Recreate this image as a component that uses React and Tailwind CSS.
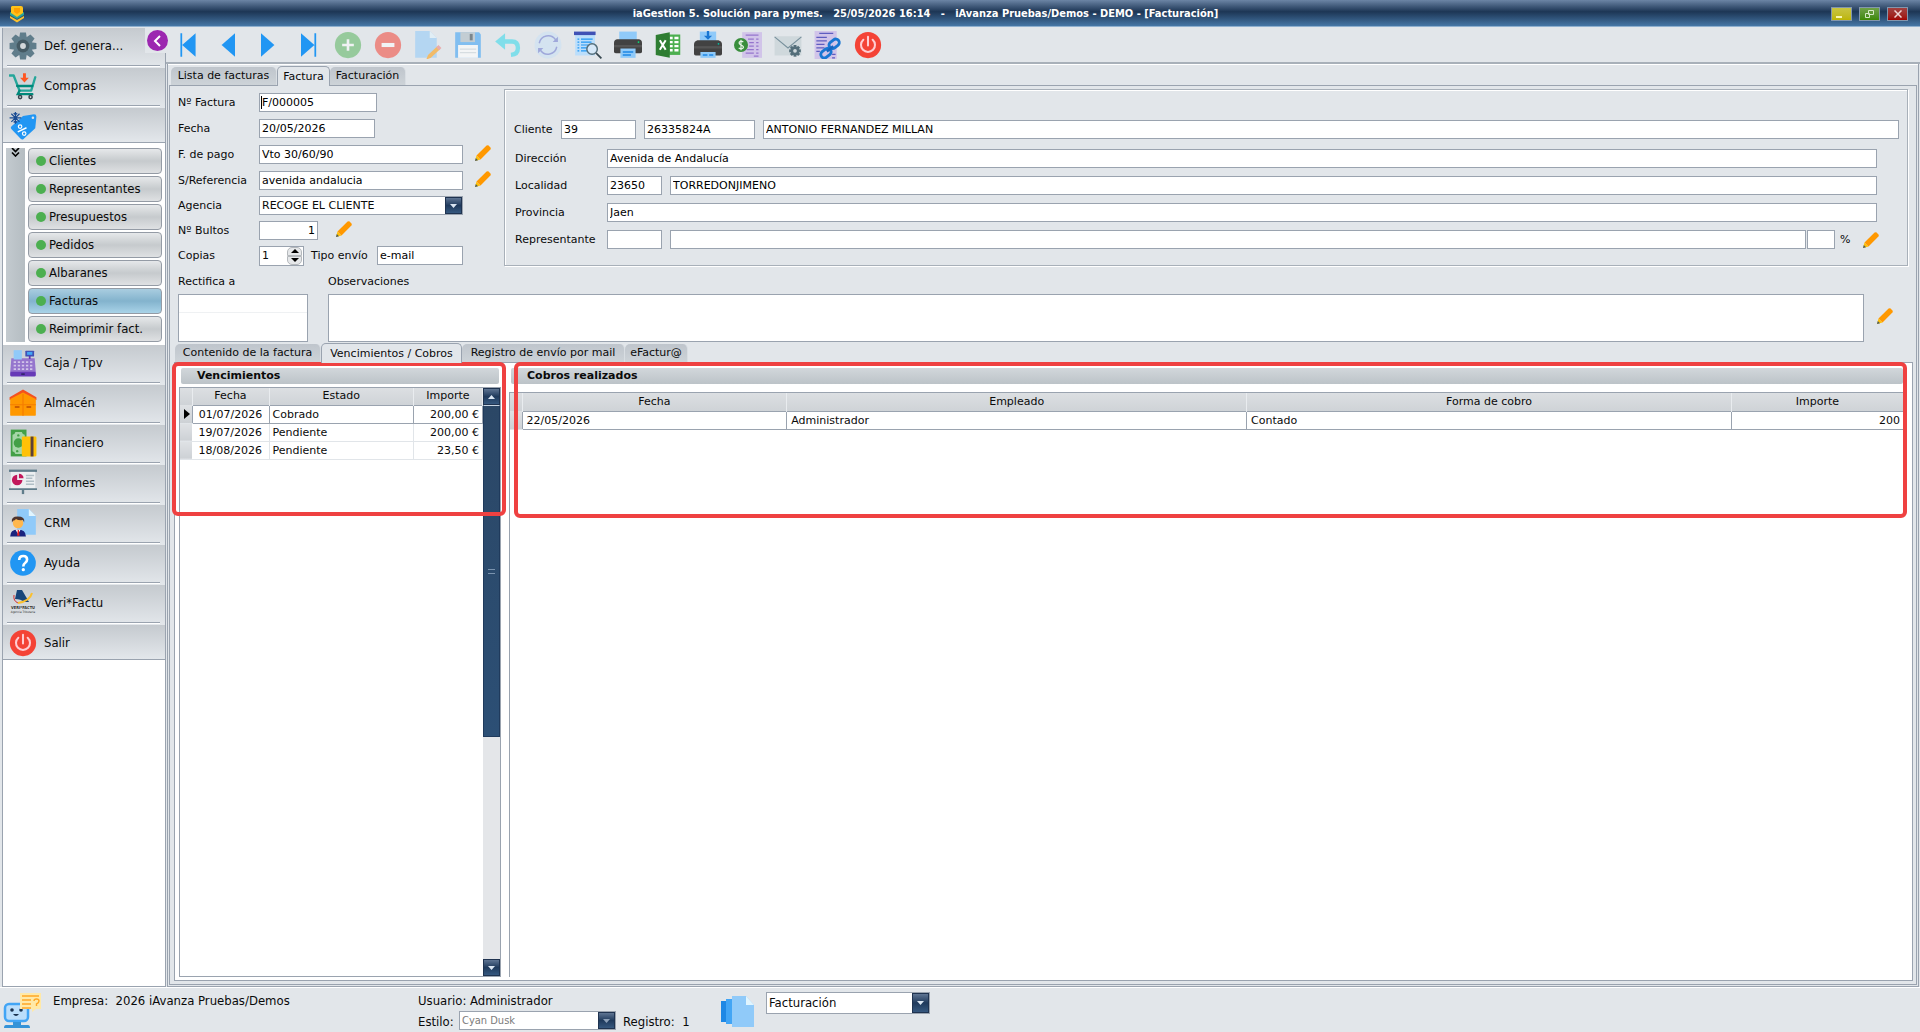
import React, { useState } from 'react';

const INPUT = "h-[19px] min-w-0 border border-[#9aa3af] bg-white px-[2px] text-[11px] text-black outline-none";

/* ---------- Icons ---------- */

const Svg = ({ size = 28, children, className = "" }) => (
  <svg width={size} height={size} viewBox="0 0 48 48" className={`shrink-0 ${className}`} aria-hidden="true">
    {children}
  </svg>
);

const PencilIcon = () => (
  <svg width="18" height="18" viewBox="0 0 18 18" aria-hidden="true">
    <path d="M1 17 L2.5 11.5 L6.5 15.5 Z" fill="#FFC107" />
    <path d="M1 17 L1.8 14 L4 16.2 Z" fill="#455A64" />
    <path d="M2.5 11.5 L12.6 1.6 Q13.6 .7 14.6 1.6 L16.4 3.4 Q17.3 4.4 16.4 5.4 L6.5 15.5 Z" fill="#FF9800" />
  </svg>
);

const GearIcon = () => (
  <Svg>
    <g fill="#607D8B">
      {[0, 45, 90, 135, 180, 225, 270, 315].map((a) => (
        <path key={a} d="M19 1 h10 l2 12 h-14z" transform={`rotate(${a} 24 24)`} />
      ))}
      <circle cx="24" cy="24" r="16" />
    </g>
    <circle cx="24" cy="24" r="11" fill="#455A64" />
    <circle cx="24" cy="24" r="5" fill="#d3d7da" />
  </Svg>
);

const CartIcon = () => (
  <Svg>
    <path d="M1 6 h7 l10 26 h20 l7 -23" fill="none" stroke="#26A69A" strokeWidth="4" strokeLinecap="round" strokeLinejoin="round" />
    <path d="M14 24 H40 M18 32 l-3 6 h25" fill="none" stroke="#00897B" strokeWidth="4" strokeLinecap="round" />
    <circle cx="19" cy="43" r="4" fill="#37474F" />
    <circle cx="37" cy="43" r="4" fill="#37474F" />
    <circle cx="19" cy="43" r="1.4" fill="#fff" />
    <circle cx="37" cy="43" r="1.4" fill="#fff" />
    <path d="M24 2 h5 v8 h5 l-7.500 8 -7.500 -8 h5z" fill="#FF5722" />
  </Svg>
);

const TagIcon = () => (
  <Svg>
    <path d="M4 25 L24 7 L43 4 Q47 4 47 8 L45 28 L24 47 Q22 48 20 46 L4 29 Q2 27 4 25Z" fill="#2196F3" />
    <circle cx="41" cy="10" r="2.200" fill="#e1e5e9" />
    <circle cx="19" cy="25" r="3" fill="none" stroke="#fff" strokeWidth="2" />
    <circle cx="26" cy="37" r="3" fill="none" stroke="#fff" strokeWidth="2" />
    <path d="M15 34 L30 27" stroke="#fff" strokeWidth="2.400" />
    <path d="M11 0 V20 M1 10 H21 M4 3 L18 17 M18 3 L4 17 M8 2 l3 3 3 -3 M8 18 l3 -3 3 3" stroke="#1A4C93" strokeWidth="2" fill="none" />
  </Svg>
);

const RegisterIcon = () => (
  <Svg>
    <path d="M4 16 h40 l2 24 H2z" fill="#9575CD" />
    <rect x="2" y="39" width="44" height="8" rx="2" fill="#673AB7" />
    <rect x="8" y="2" width="14" height="16" fill="#90CAF9" />
    <rect x="28" y="3" width="15" height="10" rx="1" fill="#3F51B5" />
    <rect x="31" y="5" width="9" height="5" fill="#42A5F5" />
    <rect x="34" y="12" width="3" height="5" fill="#5E35B1" />
    <g fill="#D1C4E9">
      {[21, 27, 33].map((y) => [8, 15, 22, 29, 36].map((x) => <rect key={`${x}-${y}`} x={x} y={y} width="4" height="3" />))}
    </g>
    <rect x="21" y="42" width="6" height="2" fill="#1a1a4b" />
  </Svg>
);

const WarehouseIcon = () => (
  <Svg>
    <path d="M1 14 L24 1 L47 14 V19 H1z" fill="#F4511E" />
    <path d="M2 17 L24 6 L46 17 V44 q0 2 -2 2 H4 q-2 0 -2 -2z" fill="#FF9800" />
    <path d="M24 8 V46 M2 27 H46" stroke="#F57C00" strokeWidth="2" />
    <path d="M10 31 h8 M30 31 h8" stroke="#BF4B00" strokeWidth="2.500" />
  </Svg>
);

const MoneyIcon = () => (
  <Svg>
    <rect x="3" y="1" width="27" height="46" fill="#43A047" />
    <path d="M11 5 h11 q1 4 5 5 v28 q-4 1 -5 5 h-11 q-1 -4 -5 -5 v-28 q4 -1 5 -5z" fill="#A5D6A7" />
    <circle cx="16" cy="24" r="8" fill="#43A047" />
    <circle cx="16" cy="11" r="2" fill="#43A047" />
    <circle cx="14" cy="38" r="2" fill="#43A047" />
    <rect x="22" y="13" width="25" height="34" rx="2" fill="#FFC107" />
    <rect x="37" y="13" width="5" height="34" fill="#5D4037" />
  </Svg>
);

const ReportIcon = () => (
  <Svg>
    <rect x="0" y="1" width="48" height="4" fill="#607D8B" />
    <rect x="3" y="5" width="42" height="29" fill="#ECEFF1" />
    <rect x="0" y="33" width="48" height="3" fill="#607D8B" />
    <rect x="22" y="36" width="4" height="7" fill="#607D8B" />
    <path d="M14 10 a9 9 0 1 0 9 9 h-9z" fill="#C2185B" />
    <path d="M17 8 a8 8 0 0 1 8 8 h-8z" fill="#C2185B" />
    <path d="M29 11 h14 M29 16 h11 M29 21 h14 M29 26 h14" stroke="#B0BEC5" strokeWidth="2.500" />
  </Svg>
);

const CrmIcon = () => (
  <Svg>
    <path d="M14 0 h20 l12 12 v32 h-32z" fill="#90CAF9" />
    <path d="M34 0 l12 12 h-12z" fill="#E1F5FE" />
    <path d="M2 47 q0 -12 13 -12 q14 0 14 12z" fill="#1A237E" />
    <path d="M11 35 h9 l-4.500 8z" fill="#fff" />
    <path d="M15 36 l2 0 1 10 h-4z" fill="#E91E1E" />
    <circle cx="15.500" cy="24" r="9" fill="#FFB74D" />
    <path d="M5 23 q-2 -10 10 -10 q13 0 11 10 l-2 -4 q-8 1 -12 -2 q-2 3 -5 3z" fill="#4E342E" />
  </Svg>
);

const HelpIcon = () => (
  <Svg>
    <circle cx="24" cy="24" r="22" fill="#2196F3" />
    <path d="M17.500 19 q0 -7 7 -7 q6.500 0 6.500 6 q0 3.500 -3.500 6 q-3 2 -3 6" fill="none" stroke="#fff" strokeWidth="4.500" />
    <circle cx="24.500" cy="35.500" r="2.800" fill="#fff" />
  </Svg>
);

const VerifactuIcon = () => (
  <svg width="28" height="28" viewBox="0 0 28 28" className="shrink-0" aria-hidden="true">
    <path d="M8 1 h5 l7 12 h-5 q-3 -3 -9 -3z" fill="#17457A" />
    <path d="M5 6 q-1 6 4 8" fill="none" stroke="#D32F2F" strokeWidth="1" />
    <path d="M23 4 q-2 8 -14 10" fill="none" stroke="#FBC02D" strokeWidth="2" />
    <text x="14" y="20" textAnchor="middle" fontSize="4" fontWeight="bold" fontFamily="DejaVu Sans Condensed" fill="#333">VERI*FACTU</text>
    <text x="14" y="24" textAnchor="middle" fontSize="3" fontFamily="DejaVu Sans Condensed" fill="#333">Agencia Tributaria</text>
  </svg>
);

const PowerIcon = () => (
  <Svg>
    <circle cx="24" cy="24" r="22.500" fill="#F44336" />
    <path d="M16 15 a12 12 0 1 0 16 0" fill="none" stroke="#FFCDD2" strokeWidth="3.500" strokeLinecap="round" />
    <path d="M24 10 V25" stroke="#FFCDD2" strokeWidth="3.500" strokeLinecap="round" />
  </Svg>
);

const FirstIcon = () => <Svg><path d="M11 4 h3 v40 h-3z M37 4 v40 L14 24z" fill="#2196F3" /></Svg>;
const PrevIcon = () => <Svg><path d="M36 4 v40 L13 24z" fill="#2196F3" /></Svg>;
const NextIcon = () => <Svg><path d="M12 4 v40 L35 24z" fill="#2196F3" /></Svg>;
const LastIcon = () => <Svg><path d="M35 4 h3 v40 h-3z M12 4 v40 L35 24z" fill="#2196F3" /></Svg>;

const AddIcon = () => (
  <Svg className="opacity-50">
    <circle cx="24" cy="24" r="22.500" fill="#4CAF50" />
    <path d="M24 14 V34 M14 24 H34" stroke="#fff" strokeWidth="4.500" />
  </Svg>
);

const RemoveIcon = () => (
  <Svg className="opacity-55">
    <circle cx="24" cy="24" r="22.500" fill="#F44336" />
    <path d="M13 24 H35" stroke="#fff" strokeWidth="7" />
  </Svg>
);

const EditDocIcon = () => (
  <Svg className="opacity-55">
    <path d="M2 0 h25 l12 12 v34 h-37z" fill="#90CAF9" />
    <path d="M27 0 l12 12 h-12z" fill="#E1F5FE" />
    <path d="M21 49 l3 -8 16 -15 5 5 -16 15z" fill="#FF9800" />
    <path d="M38 28 l5 5 4 -4 -5 -5z" fill="#EF7E7E" />
  </Svg>
);

const SaveIcon = () => (
  <Svg className="opacity-60">
    <path d="M2 2 h41 l3 4 v40 h-44z" fill="#42A5F5" />
    <rect x="11" y="2" width="25" height="17" fill="#B0BEC5" />
    <rect x="27" y="5" width="5" height="11" fill="#37474F" />
    <rect x="7" y="24" width="34" height="22" fill="#fff" />
    <path d="M10 31 h28 M10 37 h28" stroke="#CFD8DC" strokeWidth="2" />
  </Svg>
);

const UndoIcon = () => (
  <Svg>
    <path d="M2 18 L19 4 V32z" fill="#80DEEA" />
    <path d="M17 18 h14 q10 0 10 11 q0 11 -12 12" fill="none" stroke="#80DEEA" strokeWidth="7.500" />
  </Svg>
);

const RefreshIcon = () => (
  <Svg>
    <circle cx="24" cy="24" r="23" fill="#BBDEFB" opacity=".35" />
    <path d="M9 21 a15.500 15.500 0 0 1 28 -6 M39 27 a15.500 15.500 0 0 1 -28 6" fill="none" stroke="#9FA8DA" strokeWidth="2.500" />
    <path d="M41 10 v9 h-9z M7 38 v-9 h9z" fill="#9FA8DA" />
  </Svg>
);

const PreviewIcon = () => (
  <Svg>
    <rect x="2" y="2" width="34" height="40" fill="#BBDEFB" />
    <rect x="0" y="1" width="37" height="6" fill="#3F51B5" />
    <path d="M6 14 h3 M12 14 h20 M6 19 h3 M12 19 h18 M6 24 h3 M12 24 h12 M6 29 h3 M12 29 h10 M6 34 h3 M12 34 h12" stroke="#2196F3" strokeWidth="2" />
    <circle cx="31" cy="31" r="9" fill="#d6e8f8" stroke="#546E7A" strokeWidth="2.500" />
    <path d="M38 38 L47 47" stroke="#37474F" strokeWidth="3" />
  </Svg>
);

const PrinterIcon = () => (
  <Svg>
    <rect x="9" y="1" width="30" height="18" fill="#90CAF9" />
    <path d="M5 14 h38 q5 1 5 6 v16 q0 2 -3 2 H3 q-3 0 -3 -2 v-16 q0 -5 5 -6z" fill="#424242" />
    <rect x="0" y="24" width="48" height="4" fill="#555" />
    <circle cx="42" cy="19" r="1.500" fill="#00E676" />
    <path d="M11 30 h26 v16 h-26z" fill="#90CAF9" />
    <path d="M15 36 h18 M15 41 h14" stroke="#1E88E5" strokeWidth="2.500" />
  </Svg>
);

const PrintDownIcon = () => (
  <Svg>
    <rect x="10" y="1" width="28" height="18" fill="#90CAF9" />
    <path d="M22 0 h4 v8 h5 l-7 7 -7 -7 h5z" fill="#1976D2" />
    <path d="M6 16 h36 q6 2 6 7 v16 q0 3 -3 3 H3 q-3 0 -3 -3 v-16 q0 -5 6 -7z" fill="#424242" />
    <rect x="0" y="26" width="48" height="4" fill="#555" />
    <circle cx="42" cy="22" r="1.500" fill="#00BFA5" />
    <path d="M11 36 h26 v10 h-26z" fill="#90CAF9" />
    <path d="M15 41 h8 M26 41 h7" stroke="#1E88E5" strokeWidth="2.500" />
  </Svg>
);

const ExcelIcon = () => (
  <Svg>
    <rect x="24" y="6" width="21" height="35" fill="#4CAF50" />
    <path d="M27 12 h5 M35 12 h7 M27 19 h5 M35 19 h7 M27 26 h5 M35 26 h7 M27 33 h5 M35 33 h7" stroke="#fff" strokeWidth="4" />
    <path d="M27 2 L3 7 V41 L27 46z" fill="#2E7D32" />
    <path d="M10 16 L20 32 M20 16 L10 32" stroke="#fff" strokeWidth="3.500" />
  </Svg>
);

const InvoiceMoneyIcon = () => (
  <Svg>
    <rect x="14" y="2" width="34" height="44" fill="#D1C4E9" />
    <path d="M20 7 h22 M24 14 h10 M26 20 h8 M26 26 h8 M22 32 h12 M20 38 h14 M38 14 h4 M38 20 h4 M38 26 h4 M38 32 h4 M38 38 h4 M34 43 h8" stroke="#9575CD" strokeWidth="2" />
    <circle cx="12" cy="24" r="12" fill="#388E3C" />
    <path d="M16 19 q-4 -3 -7 0 q-1 3 3 5 q5 2 4 5 q-3 3 -8 0 M12 15 v18" fill="none" stroke="#E8F5E9" strokeWidth="2" />
  </Svg>
);

const MailIcon = () => (
  <Svg>
    <rect x="1" y="9" width="46" height="33" fill="#CFD8DC" />
    <path d="M1 10 L24 29 L47 10" fill="none" stroke="#78909C" strokeWidth="2" />
    <g fill="#546E7A">
      {[0, 45, 90, 135, 180, 225, 270, 315].map((a) => (
        <rect key={a} x="33.500" y="24" width="5" height="6" transform={`rotate(${a} 36 34)`} />
      ))}
      <circle cx="36" cy="34" r="7.500" />
    </g>
    <circle cx="36" cy="34" r="3.200" fill="#CFD8DC" />
  </Svg>
);

const LinkDocIcon = () => (
  <Svg>
    <path d="M1 0 h38 v48 h-38z" fill="#D1C4E9" />
    <path d="M9 4 h24 M4 11 h18 M4 17 h18 M4 23 h14 M4 29 h14 M4 35 h6 M31 40 h6 M31 46 h5" stroke="#5E5CC0" strokeWidth="2.400" />
    <rect x="25" y="16" width="19" height="12" rx="6" fill="none" stroke="#1976D2" strokeWidth="5" transform="rotate(-38 34.500 22)" />
    <rect x="11" y="32" width="19" height="12" rx="6" fill="none" stroke="#1976D2" strokeWidth="5" transform="rotate(-38 20.500 38)" />
    <path d="M22 35 L33 26" stroke="#1565C0" strokeWidth="4.500" />
  </Svg>
);

const AppLogo = () => (
  <svg width="16" height="18" viewBox="0 0 16 18" aria-hidden="true">
    <path d="M1 11 L8 15 L15 11 V13 L8 17.500 L1 13z" fill="#FBC02D" />
    <path d="M1 7 L8 11 L15 7 V10 L8 14 L1 10z" fill="#26A69A" />
    <path d="M3 1 h9 q2 0 2 2 v5 l-6 4 -6 -4 V2z" fill="#FFC21A" />
    <path d="M5 3 h6 v4 l-3 2 -3 -2z" fill="#FFA000" />
  </svg>
);

const RobotIcon = () => (
  <svg width="38" height="38" viewBox="0 0 38 38" className="shrink-0" aria-hidden="true">
    <rect x="2" y="12" width="23" height="17" rx="4" fill="#BBDEFB" stroke="#42A5F5" strokeWidth="2.500" />
    <path d="M10 30 h8 v3 h7 q2 0 2 3 h-26 q0 -3 2 -3 h7z" fill="#3593D8" />
    <circle cx="9" cy="18" r="1.800" fill="#1b3350" />
    <circle cx="18" cy="18" r="1.800" fill="#1b3350" />
    <path d="M10 22 q3 4 6 0z" fill="#1b3350" />
    <path d="M17 1 h21 v16 h-5 l-4 3 v-3 h-12z" fill="#FFE9A8" />
    <path d="M19 4 h17 M19 8 h9 M19 12 h9 M19 16 h9" stroke="#FFA726" strokeWidth="1.400" />
    <path d="M31 9 q0 -2 2.500 -2 q2.500 0 2.500 2 q0 2 -2.500 3 v2" fill="none" stroke="#FFA726" strokeWidth="1.400" />
  </svg>
);

const PagesIcon = () => (
  <svg width="34" height="34" viewBox="0 0 34 34" className="shrink-0" aria-hidden="true">
    <rect x="0" y="6" width="12" height="21" fill="#1E88E5" />
    <rect x="5" y="4" width="14" height="25" fill="#42A5F5" />
    <path d="M11 1 h14 l8 9 v22 h-22z" fill="#90CAF9" />
    <path d="M25 1 l8 9 h-8z" fill="#E1F5FE" />
  </svg>
);

/* ---------- Small controls ---------- */

const ArrowCell = ({ dim, up }) => (
  <span className="pointer-events-none flex w-[17px] shrink-0 items-center justify-center self-stretch border border-[#1f3350] bg-linear-to-b from-[#5f7593] via-[#1f3a5c] to-[#36587f]">
    <svg width="7" height="4" viewBox="0 0 7 4" aria-hidden="true">
      <path d={up ? "M0 4 L3.500 0 L7 4z" : "M0 0 H7 L3.500 4z"} fill={dim ? "#8ca0b8" : "#dbe6f2"} />
    </svg>
  </span>
);

const SelectBox = ({ id, value, className, selectClass = "text-[11px]", dim, label }) => (
  <div className={`flex border border-[#9aa3af] bg-white ${className}`}>
    <select id={id} aria-label={label} defaultValue={value} className={`min-w-0 flex-1 appearance-none bg-transparent pl-[2px] outline-none ${selectClass}`}>
      <option>{value}</option>
    </select>
    <ArrowCell dim={dim} />
  </div>
);

const PencilButton = ({ label }) => (
  <button type="button" aria-label={label} className="mb-[4px] flex h-[18px] w-[18px] shrink-0 items-center justify-center">
    <PencilIcon />
  </button>
);

const FormRow = ({ id, label, children }) => (
  <div className="flex h-[19px] items-center">
    <label htmlFor={id} className="w-[81px] shrink-0">{label}</label>
    {children}
  </div>
);

const TabBar = ({ tabs, active, onChange, className = "" }) => (
  <div role="tablist" className={`flex h-[19px] items-end ${className}`}>
    {tabs.map((tab) => (
      <button
        key={tab.name}
        type="button"
        role="tab"
        aria-selected={active === tab.name}
        onClick={() => onChange(tab.name)}
        className={`rounded-t-[5px] text-center whitespace-nowrap ${tab.width} ${
          active === tab.name
            ? "z-10 -mb-px h-[20px] border border-b-0 border-[#9aa3af] bg-[#e2e6ea]"
            : "h-[18px] border-r border-[#d9dee3] bg-linear-to-b from-[#bfc5cc] to-[#cdd3d8]"
        }`}
      >
        {tab.name}
      </button>
    ))}
  </div>
);

const SectionTitle = ({ children, className }) => (
  <h2 className={`h-[16px] rounded-[2px] bg-linear-to-b from-[#d2d7db] to-[#bcc3c8] text-[11px] leading-[15px] font-bold ${className}`}>
    {children}
  </h2>
);

/* ---------- Sidebar ---------- */

const topMenu = [
  { name: "Def. genera...", icon: GearIcon },
  { name: "Compras", icon: CartIcon },
  { name: "Ventas", icon: TagIcon },
];

const bottomMenu = [
  { name: "Caja / Tpv", icon: RegisterIcon },
  { name: "Almacén", icon: WarehouseIcon },
  { name: "Financiero", icon: MoneyIcon },
  { name: "Informes", icon: ReportIcon },
  { name: "CRM", icon: CrmIcon },
  { name: "Ayuda", icon: HelpIcon },
  { name: "Veri*Factu", icon: VerifactuIcon },
  { name: "Salir", icon: PowerIcon },
];

const subMenu = ["Clientes", "Representantes", "Presupuestos", "Pedidos", "Albaranes", "Facturas", "Reimprimir fact."];

const MenuGroup = ({ items }) => (
  <ul>
    {items.map(({ name, icon: Icon }, i) => (
      <li
        key={name}
        className={`flex flex-col bg-linear-to-b from-[#c5cacf] to-[#e3e7eb] ${
          i === items.length - 1 ? "h-[35px] border-b border-[#9aa3af]" : "h-[40px]"
        }`}
      >
        <button type="button" className="flex h-[35px] shrink-0 items-center gap-[7px] pl-[6px] text-[13px]">
          <Icon />
          <span>{name}</span>
        </button>
        {i < items.length - 1 && <div className="mt-[2px] mr-[5px] ml-[4px] h-[2px] border-t border-[#9aa3af] bg-white" />}
      </li>
    ))}
  </ul>
);

const Sidebar = ({ current, onSelect }) => (
  <nav className="relative mt-px ml-[2px] flex w-[164px] shrink-0 flex-col border border-t-0 border-[#9aa3af] bg-white font-['DejaVu_Sans_Condensed','DejaVu_Sans',sans-serif]">
    <MenuGroup items={topMenu} />
    <div className="flex gap-[3px] px-[3px] pt-[5px] pb-[3px]">
      <div className="flex w-[19px] justify-center bg-linear-to-r from-[#c3cacf] to-[#b5bdc2]">
        <svg width="9" height="9" viewBox="0 0 9 9" aria-hidden="true">
          <path d="M1 0 L4.500 3.500 L8 0 M1 4.500 L4.500 8 L8 4.500" fill="none" stroke="#000" strokeWidth="1.600" />
        </svg>
      </div>
      <ul className="flex min-w-0 flex-1 flex-col gap-[2px]">
        {subMenu.map((name) => (
          <li key={name}>
            <button
              type="button"
              onClick={() => onSelect(name)}
              className={`flex h-[26px] w-full items-center gap-[3px] rounded-[4px] border border-[#949ba5] pl-[7px] text-[13px] whitespace-nowrap ${
                current === name
                  ? "bg-linear-to-b from-[#a9cde0] via-[#83b3cd] to-[#a9d3e8]"
                  : "bg-linear-to-b from-[#e6e8ea] via-[#c6cacd] to-[#dfe1e3]"
              }`}
            >
              <span className="h-[10px] w-[10px] shrink-0 rounded-full bg-[#4CAF50]" />
              {name}
            </button>
          </li>
        ))}
      </ul>
    </div>
    <MenuGroup items={bottomMenu} />
    <div className="absolute top-0 -right-[4px] flex h-[25px] w-[24px] items-center justify-center bg-[#e2e6ea]">
      <button type="button" aria-label="Contraer menú" className="flex h-[21px] w-[21px] items-center justify-center rounded-full bg-[#9C27B0]">
        <svg width="8" height="12" viewBox="0 0 8 12" aria-hidden="true">
          <path d="M7 1 L2 6 L7 11" fill="none" stroke="#fff" strokeWidth="2" />
        </svg>
      </button>
    </div>
  </nav>
);

/* ---------- Toolbar ---------- */

const toolbar = [
  ["Primero", FirstIcon],
  ["Anterior", PrevIcon],
  ["Siguiente", NextIcon],
  ["Último", LastIcon],
  ["Nuevo", AddIcon],
  ["Eliminar", RemoveIcon],
  ["Editar", EditDocIcon],
  ["Guardar", SaveIcon],
  ["Deshacer", UndoIcon],
  ["Refrescar", RefreshIcon],
  ["Vista previa", PreviewIcon],
  ["Imprimir", PrinterIcon],
  ["Exportar a Excel", ExcelIcon],
  ["Imprimir en archivo", PrintDownIcon],
  ["Cobrar", InvoiceMoneyIcon],
  ["Enviar por correo", MailIcon],
  ["Enlazar documento", LinkDocIcon],
  ["Cerrar", PowerIcon],
];

const Toolbar = () => (
  <div className="flex h-[37px] shrink-0 border-b-2 border-[#a8b0b9] pl-[2px]">
    {toolbar.map(([name, Icon]) => (
      <button key={name} type="button" title={name} aria-label={name} className="flex w-[40px] items-center justify-center">
        <Icon />
      </button>
    ))}
  </div>
);

/* ---------- Invoice form ---------- */

const InvoiceFields = () => (
  <div className="flex w-[326px] shrink-0 flex-col gap-[6px] pt-[4px]">
    <div className="flex flex-col gap-[7px]">
      <FormRow id="numero" label="Nº Factura">
        <div className="relative flex">
          <input id="numero" defaultValue="F/000005" className={`${INPUT} w-[118px]`} />
          <span className="absolute top-[3px] left-[2px] h-[13px] w-px bg-black" />
        </div>
      </FormRow>
      <FormRow id="fecha" label="Fecha">
        <input id="fecha" defaultValue="20/05/2026" className={`${INPUT} w-[116px]`} />
      </FormRow>
      <FormRow id="pago" label="F. de pago">
        <input id="pago" defaultValue="Vto 30/60/90" className={`${INPUT} mr-[11px] w-[204px]`} />
        <PencilButton label="Editar forma de pago" />
      </FormRow>
      <FormRow id="referencia" label="S/Referencia">
        <input id="referencia" defaultValue="avenida andalucia" className={`${INPUT} mr-[11px] w-[204px]`} />
        <PencilButton label="Editar referencia" />
      </FormRow>
    </div>
    <FormRow id="agencia" label="Agencia">
      <SelectBox id="agencia" value="RECOGE EL CLIENTE" className="h-[19px] w-[204px]" />
    </FormRow>
    <FormRow id="bultos" label="Nº Bultos">
      <input id="bultos" defaultValue="1" className={`${INPUT} mr-[17px] w-[59px] text-right`} />
      <PencilButton label="Editar bultos" />
    </FormRow>
    <FormRow id="copias" label="Copias">
      <div className="flex h-[20px] w-[45px] items-center border border-[#9aa3af] bg-white pr-px">
        <input id="copias" defaultValue="1" className="w-0 min-w-0 flex-1 pl-[2px] text-[11px] outline-none" />
        <div className="flex flex-col">
          <button type="button" aria-label="Más copias" className="flex h-[9px] w-[15px] items-center justify-center rounded-t-[5px] border border-[#b4b8bc] bg-[#e6e8ea]">
            <svg width="8" height="4" viewBox="0 0 8 4" aria-hidden="true"><path d="M0 4 L4 0 L8 4z" /></svg>
          </button>
          <button type="button" aria-label="Menos copias" className="flex h-[9px] w-[15px] items-center justify-center rounded-b-[5px] border border-[#b4b8bc] bg-[#e6e8ea]">
            <svg width="8" height="4" viewBox="0 0 8 4" aria-hidden="true"><path d="M0 0 H8 L4 4z" /></svg>
          </button>
        </div>
      </div>
      <label htmlFor="envio" className="w-[73px] shrink-0 pl-[7px] whitespace-nowrap">Tipo envío</label>
      <input id="envio" defaultValue="e-mail" className={`${INPUT} w-[86px]`} />
    </FormRow>
  </div>
);

const CustomerPanel = () => (
  <fieldset className="flex h-[177px] min-w-0 flex-1 flex-col gap-[8px] border border-[#a8b0b9] px-[8px] pt-[30px] shadow-[inset_1px_1px_0_#fff,1px_1px_0_#fff]">
    <div className="mb-[2px] flex items-center gap-[8px]">
      <div className="flex items-center">
        <label htmlFor="cliente" className="w-[48px] pl-px">Cliente</label>
        <input id="cliente" defaultValue="39" className={`${INPUT} w-[75px]`} />
      </div>
      <input aria-label="NIF" defaultValue="26335824A" className={`${INPUT} w-[111px]`} />
      <input aria-label="Nombre" defaultValue="ANTONIO FERNANDEZ MILLAN" className={`${INPUT} flex-1`} />
    </div>
    <div className="flex items-center pr-[22px]">
      <label htmlFor="direccion" className="w-[94px] pl-[2px]">Dirección</label>
      <input id="direccion" defaultValue="Avenida de Andalucía" className={`${INPUT} flex-1`} />
    </div>
    <div className="flex items-center pr-[22px]">
      <label htmlFor="localidad" className="w-[94px] pl-[2px]">Localidad</label>
      <input id="localidad" defaultValue="23650" className={`${INPUT} mr-[8px] w-[55px]`} />
      <input aria-label="Población" defaultValue="TORREDONJIMENO" className={`${INPUT} flex-1`} />
    </div>
    <div className="flex items-center pr-[22px]">
      <label htmlFor="provincia" className="w-[94px] pl-[2px]">Provincia</label>
      <input id="provincia" defaultValue="Jaen" className={`${INPUT} flex-1`} />
    </div>
    <div className="flex h-[19px] items-center pr-[19px]">
      <label htmlFor="representante" className="w-[94px] pl-[2px]">Representante</label>
      <input id="representante" className={`${INPUT} mr-[8px] w-[55px]`} />
      <input aria-label="Nombre del representante" className={`${INPUT} mr-px flex-1`} />
      <input id="comision" className={`${INPUT} w-[28px]`} />
      <label htmlFor="comision" className="w-[27px] pl-[5px]">%</label>
      <button type="button" aria-label="Editar representante" className="flex h-[18px] w-[18px] items-center justify-center">
        <PencilIcon />
      </button>
    </div>
  </fieldset>
);

/* ---------- Grids ---------- */

const TH = "border-r border-[#e9ecef] p-0 text-center text-[11px] font-normal";
const MARK = "border-b border-[#e1e5e9] bg-linear-to-b from-[#dfe2e5] to-[#cdd1d5] p-0";

const dueDates = [
  { date: "01/07/2026", state: "Cobrado", amount: "200,00 €" },
  { date: "19/07/2026", state: "Pendiente", amount: "200,00 €" },
  { date: "18/08/2026", state: "Pendiente", amount: "23,50 €" },
];

const DueDatesGrid = () => (
  <div className="mt-[3px] mr-[8px] ml-[4px] flex flex-1 border border-[#9aa3af] bg-white">
    <div className="min-w-0 flex-1">
      <table className="w-full table-fixed border-collapse text-[11px]">
        <colgroup>
          <col className="w-[12px]" />
          <col className="w-[77px]" />
          <col />
          <col className="w-[69px]" />
        </colgroup>
        <thead>
          <tr className="h-[17px] bg-linear-to-b from-[#dcdfe2] to-[#cfd3d7]">
            <th className={TH} />
            <th className={TH}>Fecha</th>
            <th className={TH}>Estado</th>
            <th className={TH}>Importe</th>
          </tr>
        </thead>
        <tbody>
          {dueDates.map((row, i) => {
            const cell = i === 0 ? "border border-[#9aa3af]" : "border-r border-b border-[#e1e5e9]";
            return (
              <tr key={row.date} className="h-[18px]">
                <td className={MARK}>
                  {i === 0 && <svg width="6" height="10" viewBox="0 0 6 10" className="ml-[4px]" aria-hidden="true"><path d="M0 0 L6 5 L0 10z" /></svg>}
                </td>
                <td className={`${cell} px-0 pt-px pb-0 text-center leading-[16px]`}>{row.date}</td>
                <td className={`${cell} pt-px pr-0 pb-0 pl-[3px] leading-[16px]`}>{row.state}</td>
                <td className={`${cell} pt-px pr-[3px] pb-0 pl-0 text-right leading-[16px]`}>{row.amount}</td>
              </tr>
            );
          })}
        </tbody>
      </table>
    </div>
    <div className="flex w-[17px] shrink-0 flex-col bg-[#e4e6e9]">
      <button type="button" aria-label="Subir" className="flex h-[17px]"><ArrowCell up /></button>
      <div className="flex basis-[332px] items-center justify-center border border-[#1f3a5c] border-t-[#c9d6e4] bg-linear-to-b from-[#2b4766] to-[#2c4f75]">
        <span className="h-[5px] w-[7px] border-y border-[#7a93ae]" />
      </div>
      <div className="flex-1" />
      <button type="button" aria-label="Bajar" className="flex h-[17px]"><ArrowCell /></button>
    </div>
  </div>
);

const PAY = "border border-[#9aa3af] pt-px pr-0 pb-0 pl-[4px] leading-[16px]";

const PaymentsGrid = () => (
  <div className="mt-[8px] mr-[8px] flex-1 border-t border-l border-[#9aa3af] bg-white">
    <table className="w-full table-fixed border-collapse text-[11px]">
      <colgroup>
        <col className="w-[12px]" />
        <col className="w-[19%]" />
        <col className="w-[33%]" />
        <col />
        <col className="w-[172px]" />
      </colgroup>
      <thead>
        <tr className="h-[18px] bg-linear-to-b from-[#dcdfe2] to-[#cfd3d7]">
          <th className={TH} />
          <th className={TH}>Fecha</th>
          <th className={TH}>Empleado</th>
          <th className={TH}>Forma de cobro</th>
          <th className={TH}>Importe</th>
        </tr>
      </thead>
      <tbody>
        <tr className="h-[18px]">
          <td className={MARK} />
          <td className={PAY}>22/05/2026</td>
          <td className={PAY}>Administrador</td>
          <td className={PAY}>Contado</td>
          <td className="border border-[#9aa3af] pt-px pr-[3px] pb-0 pl-0 text-right leading-[16px]">200</td>
        </tr>
      </tbody>
    </table>
  </div>
);

const DetailPanel = () => (
  <div className="flex flex-1 border border-[#9aa3af] bg-white pt-[5px] pb-[3px]">
    <section className="relative flex w-[334px] shrink-0 flex-col">
      <SectionTitle className="mr-[10px] ml-[6px] pl-[16px]">Vencimientos</SectionTitle>
      <DueDatesGrid />
      <div className="pointer-events-none absolute -top-[6px] right-[3px] -left-[3px] h-[154px] rounded-[6px] border-4 border-[#ef4141]" />
    </section>
    <section className="relative flex min-w-0 flex-1 flex-col">
      <SectionTitle className="mr-[9px] ml-[2px] pl-[16px]">Cobros realizados</SectionTitle>
      <PaymentsGrid />
      <div className="pointer-events-none absolute -top-[6px] right-[5px] left-[5px] h-[156px] rounded-[6px] border-4 border-[#ef4141]" />
    </section>
  </div>
);

/* ---------- Window ---------- */

const TitleBar = () => (
  <header className="flex h-[27px] shrink-0 items-center border-b border-[#8fb0cf] bg-linear-to-b from-[#6c85a5] via-[#1d3655] via-45% to-[#4677a6] px-[9px] pt-px text-white">
    <div className="flex flex-1"><AppLogo /></div>
    <h1 className="mr-[66px] font-['DejaVu_Sans_Condensed','DejaVu_Sans',sans-serif] text-[11px] font-bold whitespace-pre">
      iaGestion 5. Solución para pymes.   25/05/2026 16:14   -   iAvanza Pruebas/Demos - DEMO - [Facturación]
    </h1>
    <div className="flex flex-1 justify-end gap-[7px] pr-[3px]">
      <button type="button" aria-label="Minimizar" className="flex h-[14px] w-[21px] items-end border border-[#8396ad] bg-linear-to-b from-[#c9c540] to-[#bdb500] pb-[2px] pl-[4px]">
        <span className="h-[2px] w-[6px] bg-[#f8f6b0]" />
      </button>
      <button type="button" aria-label="Restaurar" className="flex h-[14px] w-[21px] items-center justify-center border border-[#8396ad] bg-linear-to-b from-[#6fa046] to-[#3d8a00]">
        <svg width="9" height="8" viewBox="0 0 9 8" aria-hidden="true"><path d="M3.500 .5 h5 v4 h-5z M.5 3.500 h4 v4 h-4z" fill="none" stroke="#d5e8c5" /></svg>
      </button>
      <button type="button" aria-label="Cerrar ventana" className="flex h-[14px] w-[21px] items-center justify-center border border-[#8396ad] bg-linear-to-b from-[#a04040] to-[#a00000]">
        <svg width="8" height="8" viewBox="0 0 8 8" aria-hidden="true"><path d="M.5 .5 L7.500 7.500 M7.500 .5 L.5 7.500" stroke="#f0d5d5" strokeWidth="1.500" /></svg>
      </button>
    </div>
  </header>
);

const StatusBar = () => (
  <footer className="flex h-[45px] shrink-0 border-t border-white pl-[3px] font-['DejaVu_Sans_Condensed','DejaVu_Sans',sans-serif] text-[13px]">
    <div className="flex w-[415px] gap-[12px] pt-[4px]">
      <RobotIcon />
      <span className="leading-[18px] whitespace-pre">Empresa:  2026 iAvanza Pruebas/Demos</span>
    </div>
    <div className="w-[303px] pt-[4px]">
      <div className="leading-[18px]">Usuario: Administrador</div>
      <div className="flex items-start">
        <label htmlFor="estilo" className="w-[41px] pt-[4px]">Estilo:</label>
        <SelectBox id="estilo" value="Cyan Dusk" dim className="mt-px h-[19px] w-[157px]" selectClass="text-[11px] text-[#7b7b7b]" />
        <span className="pt-[4px] pl-[7px] whitespace-pre">Registro:  1</span>
      </div>
    </div>
    <div className="flex items-start gap-[11px] pt-[4px]">
      <div className="pt-[3px]"><PagesIcon /></div>
      <SelectBox label="Ventana" value="Facturación" className="h-[22px] w-[164px]" selectClass="text-[13px]" />
    </div>
  </footer>
);

const mainTabs = [
  { name: "Lista de facturas", width: "w-[106px]" },
  { name: "Factura", width: "w-[53px]" },
  { name: "Facturación", width: "w-[76px]" },
];

const detailTabs = [
  { name: "Contenido de la factura", width: "w-[146px]" },
  { name: "Vencimientos / Cobros", width: "w-[141px]" },
  { name: "Registro de envío por mail", width: "w-[163px]" },
  { name: "eFactur@", width: "w-[63px]" },
];

const App = () => {
  const [section, setSection] = useState("Facturas");
  const [mainTab, setMainTab] = useState("Factura");
  const [detailTab, setDetailTab] = useState("Vencimientos / Cobros");

  return (
    <div className="flex min-h-screen flex-col bg-[#e2e6ea] font-['DejaVu_Sans',Verdana,sans-serif] text-[11px] leading-[16px] text-[#0a0a0a]">
      <TitleBar />
      <div className="flex flex-1">
        <Sidebar current={section} onSelect={setSection} />
        <main className="flex min-w-0 flex-1 flex-col">
          <Toolbar />
          <div className="mr-px ml-px flex flex-1 flex-col border border-t-0 border-[#9aa3af] px-px pt-[2px] pb-px shadow-[inset_0_1px_0_#fff]">
            <TabBar tabs={mainTabs} active={mainTab} onChange={setMainTab} className="pl-[2px]" />
            <div className="flex flex-1 flex-col border border-[#9aa3af] pb-[3px]">
              <div className="flex px-[8px] pt-[3px]">
                <InvoiceFields />
                <CustomerPanel />
              </div>
              <div className="mt-[8px] flex gap-[20px] pl-[8px]">
                <div className="flex w-[130px] flex-col gap-[4px]">
                  <label htmlFor="rectifica">Rectifica a</label>
                  <textarea id="rectifica" className="h-[48px] resize-none border border-[#9aa3af] bg-white bg-linear-to-b from-white from-[17px] via-[#dfe3e7] via-[17px] to-white to-[18px] outline-none" />
                </div>
                <div className="flex min-w-0 flex-1 flex-col gap-[4px]">
                  <label htmlFor="observaciones">Observaciones</label>
                  <div className="flex items-center gap-[12px] pr-[22px]">
                    <textarea id="observaciones" className="h-[48px] flex-1 resize-none border border-[#9aa3af] bg-white outline-none" />
                    <PencilButton label="Editar observaciones" />
                  </div>
                </div>
              </div>
              <div className="mt-px flex flex-1 flex-col pr-[3px] pl-[4px]">
                <TabBar tabs={detailTabs} active={detailTab} onChange={setDetailTab} className="pl-px" />
                <DetailPanel />
              </div>
            </div>
          </div>
        </main>
      </div>
      <StatusBar />
    </div>
  );
};

export default App;
